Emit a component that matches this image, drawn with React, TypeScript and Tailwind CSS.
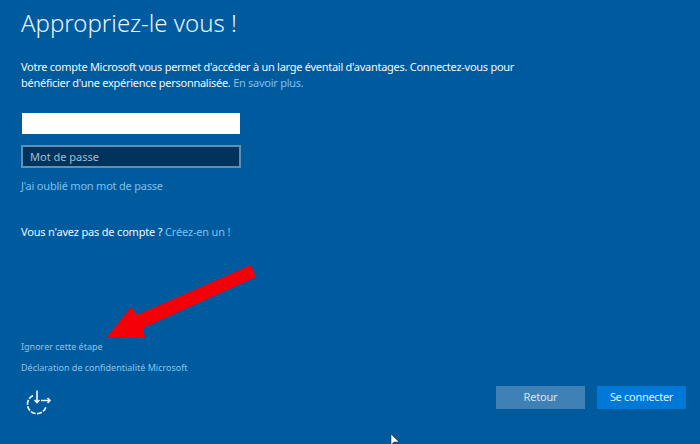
export default function App() {
  return (
    <div className="relative w-[700px] h-[444px] overflow-hidden bg-[#005a9e] text-white font-['Noto_Sans','Open_Sans',sans-serif]">
      <div className="flex flex-col h-full pl-[21px] pr-[14px]">
        <h1 className="mt-[3px] h-[40px] text-[24px] leading-[40px] font-light text-[#e6f3fb]">Appropriez-le vous !</h1>
        <p className="mt-[16px] w-[500px] text-[11px] leading-[16px] tracking-[-0.27px] text-[#f2f8fc]">
          Votre compte Microsoft vous permet d'accéder à un large éventail d'avantages. Connectez-vous pour bénéficier d'une expérience personnalisée. <span className="text-[#7cc0ee]">En savoir plus.</span>
        </p>
        <input className="mt-[22px] ml-px w-[218px] h-[21px] bg-white outline-none" aria-label="Compte" />
        <div className="mt-[11px] w-[220px] h-[23px] flex items-center pl-[7px] border-2 border-[#5f8fb5] bg-[#00345c] text-[11px] text-[#a3bdd1]">
          <span className="translate-y-px">Mot de passe</span>
        </div>
        <a className="mt-[10px] text-[11px] leading-[16px] tracking-[-0.21px] text-[#7cc0ee]">J'ai oublié mon mot de passe</a>
        <p className="mt-[30px] text-[11px] leading-[16px] tracking-[-0.18px] text-[#f2f8fc]">
          Vous n'avez pas de compte ? <span className="text-[#7cc0ee]">Créez-en un !</span>
        </p>
        <a className="mt-[101px] text-[9px] leading-[12px] text-[#8cc4ea]">Ignorer cette étape</a>
        <a className="mt-[9px] text-[9px] leading-[12px] text-[#8cc4ea]">Déclaration de confidentialité Microsoft</a>
        <div className="mt-[10px] flex items-start justify-between">
          <svg className="ml-[5px] mt-[5px]" width="26" height="26" viewBox="0 0 26 26" fill="none" stroke="#f2f8fc" strokeWidth="1.6">
            <path d="M7 6.5A9.5 9.5 0 1 0 20 18" strokeDasharray="5 1.4" />
            <path d="M11 1.5v12M8.5 11 11 13.5l2.5-2.5M15 11.5h9M21.5 9l2.5 2.5-2.5 2.5" />
          </svg>
          <div className="flex gap-[12px] mt-[2px]">
            <button className="w-[89px] h-[23px] bg-[#3f80b5] text-[11px] tracking-[-0.2px] text-[#d5e6f3]">Retour</button>
            <button className="w-[89px] h-[23px] bg-[#0078d7] text-[11px] tracking-[-0.3px] text-[#e3f1fb]">Se connecter</button>
          </div>
        </div>
      </div>
      <svg className="absolute left-0 top-0" width="700" height="444" viewBox="0 0 700 444" fill="none">
        <polygon points="251,265 256,277 143,328 145,338 107,337 131,307 137,315" fill="#f40009" />
        <path d="M391 434v11l3-3h5z" fill="#ffffff" stroke="#222" strokeWidth="0.5" />
      </svg>
    </div>
  );
}
